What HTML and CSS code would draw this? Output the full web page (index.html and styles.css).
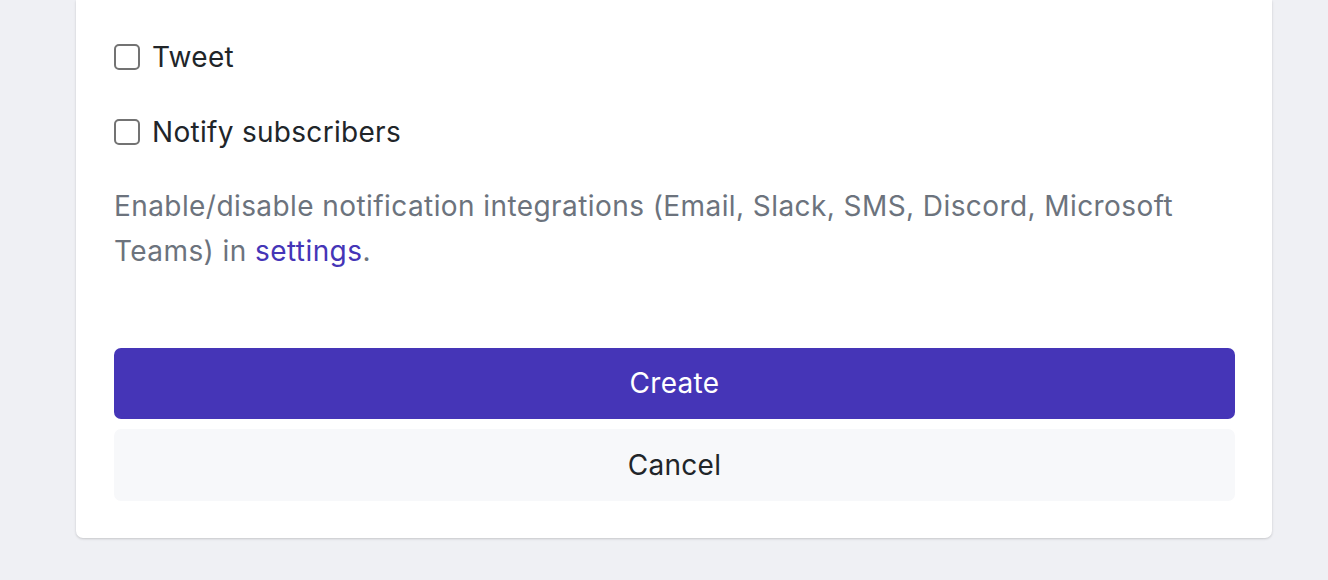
FILE: index.html
```html
<!DOCTYPE html>
<html>
<head>
<meta charset="utf-8">
<link rel="stylesheet" href="styles.css">
</head>
<body>
<div class="page">
  <div class="card">
    <label class="check-row">
      <span class="box"></span>
      <span class="label">Tweet</span>
    </label>
    <label class="check-row">
      <span class="box"></span>
      <span class="label">Notify subscribers</span>
    </label>
    <p class="help">Enable/disable notification integrations (Email, Slack, SMS, Discord, Microsoft Teams) in <a href="#" class="link">settings</a>.</p>
    <div class="actions">
      <button class="btn btn-primary">Create</button>
      <button class="btn btn-secondary">Cancel</button>
    </div>
  </div>
</div>
</body>
</html>
```

FILE: styles.css
```css
html, body {
  margin: 0;
  padding: 0;
  background: #eff0f4;
  font-family: Inter, "Noto Sans", "Liberation Sans", sans-serif;
}
.page {
  padding-left: 76px;
  height: 580px;
  overflow: hidden;
}
.card {
  width: 1196px;
  box-sizing: border-box;
  background: #ffffff;
  border-radius: 0 0 7px 7px;
  box-shadow: 0 1px 3px rgba(0,0,0,0.12), 0 1px 2px rgba(0,0,0,0.06);
  padding: 34px 37px 37px 38px;
  display: flex;
  flex-direction: column;
}
.check-row {
  display: flex;
  align-items: center;
  height: 45px;
  margin-bottom: 30px;
  font-size: 28px;
  letter-spacing: 0.3px;
  color: #212529;
}
.box {
  width: 26px;
  height: 26px;
  box-sizing: border-box;
  border: 2px solid #737373;
  border-radius: 5px;
  margin-right: 12px;
  flex: none;
}
.help {
  margin: 0;
  font-size: 28px;
  line-height: 44.8px;
  letter-spacing: 0.42px;
  color: #6c737d;
}
.link {
  color: #4535b7;
  text-decoration: none;
}
.actions {
  margin-top: 74px;
  display: flex;
  flex-direction: column;
  gap: 10px;
}
.btn {
  border: none;
  border-radius: 7px;
  font-family: inherit;
  font-size: 28px;
  letter-spacing: 0.3px;
  width: 100%;
  padding: 0;
}
.btn-primary {
  height: 71px;
  background: #4535b7;
  color: #ffffff;
}
.btn-secondary {
  height: 72px;
  background: #f7f8fa;
  color: #212529;
}
```
